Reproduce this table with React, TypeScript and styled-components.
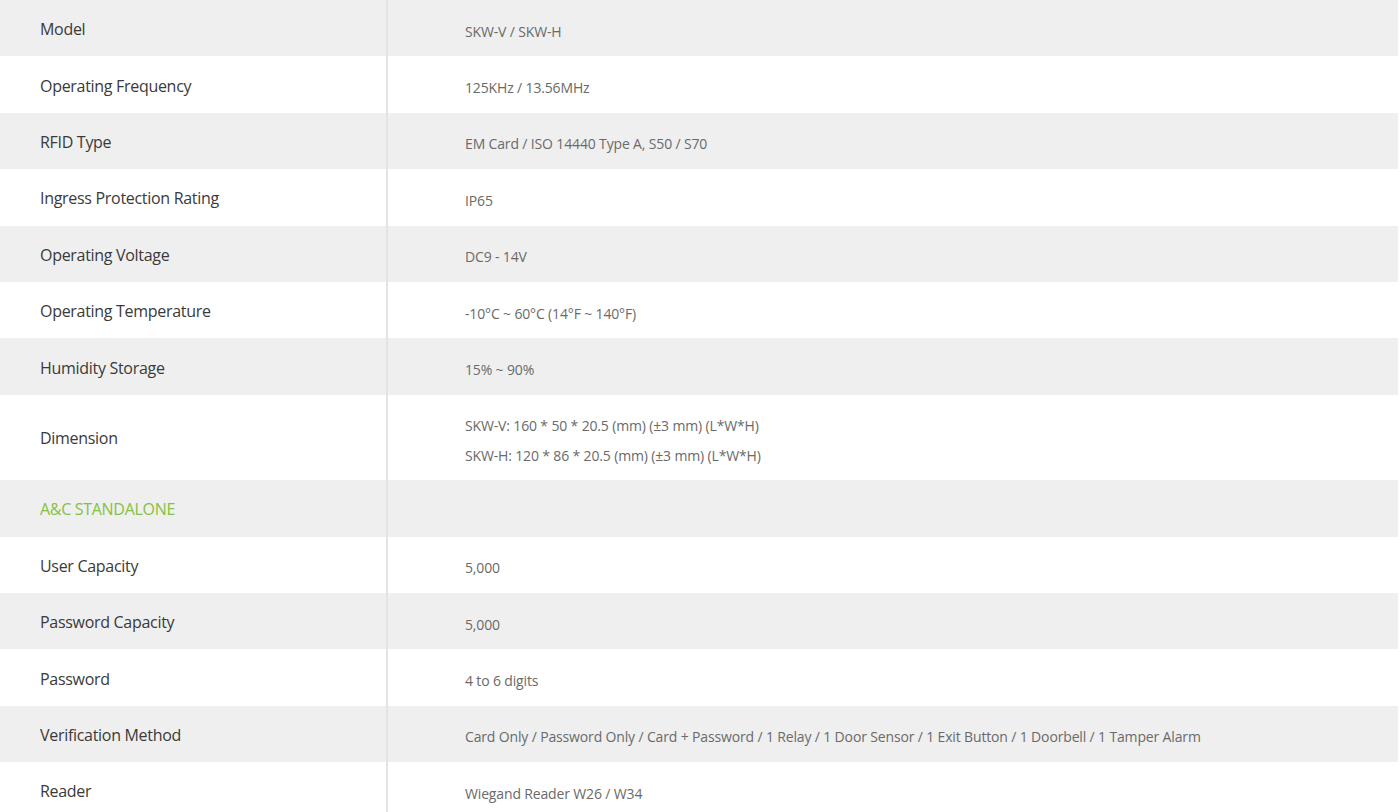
import React from "react";
import styled, { createGlobalStyle } from "styled-components";

const GlobalStyle = createGlobalStyle`
  html, body { margin: 0; padding: 0; background: #ffffff; }
  body { font-family: "Open Sans", "Lato", sans-serif; }
`;

const Table = styled.div`
  width: 1398px;
  display: flex;
  flex-direction: column;
`;

const Row = styled.div<{ $shaded: boolean; $tall?: boolean }>`
  display: grid;
  grid-template-columns: 386px 2px 1fr;
  height: ${(p) => (p.$tall ? "85.5px" : "56.4px")};
  background: ${(p) => (p.$shaded ? "#efefef" : "#ffffff")};
`;

const Divider = styled.div`
  background: #e4e4e4;
`;

const Label = styled.div<{ $accent?: boolean }>`
  display: flex;
  align-items: center;
  padding-left: 40px;
  padding-top: 2px;
  font-family: "Open Sans", "Lato", sans-serif;
  font-size: 16px;
  letter-spacing: -0.3px;
  color: ${(p) => (p.$accent ? "#84c241" : "#3a3a3a")};
`;

const Value = styled.div`
  display: flex;
  flex-direction: column;
  justify-content: center;
  padding-left: 77px;
  padding-top: 7px;
  font-family: "Open Sans", "Lato", sans-serif;
  font-size: 14px;
  line-height: 30px;
  letter-spacing: -0.15px;
  color: #6a6a6a;
`;

type Spec = { label: string; value: string[]; accent?: boolean };

const specs: Spec[] = [
  { label: "Model", value: ["SKW-V / SKW-H"] },
  { label: "Operating Frequency", value: ["125KHz / 13.56MHz"] },
  { label: "RFID Type", value: ["EM Card / ISO 14440 Type A, S50 / S70"] },
  { label: "Ingress Protection Rating", value: ["IP65"] },
  { label: "Operating Voltage", value: ["DC9 - 14V"] },
  { label: "Operating Temperature", value: ["-10°C ~ 60°C (14°F ~ 140°F)"] },
  { label: "Humidity Storage", value: ["15% ~ 90%"] },
  {
    label: "Dimension",
    value: [
      "SKW-V: 160 * 50 * 20.5 (mm) (±3 mm) (L*W*H)",
      "SKW-H: 120 * 86 * 20.5 (mm) (±3 mm) (L*W*H)",
    ],
  },
  { label: "A&C STANDALONE", value: [], accent: true },
  { label: "User Capacity", value: ["5,000"] },
  { label: "Password Capacity", value: ["5,000"] },
  { label: "Password", value: ["4 to 6 digits"] },
  {
    label: "Verification Method",
    value: [
      "Card Only / Password Only / Card + Password / 1 Relay / 1 Door Sensor / 1 Exit Button / 1 Doorbell / 1 Tamper Alarm",
    ],
  },
  { label: "Reader", value: ["Wiegand Reader W26 / W34"] },
];

export default function App() {
  return (
    <>
      <GlobalStyle />
      <Table>
        {specs.map((s, i) => (
          <Row key={s.label} $shaded={i % 2 === 0} $tall={s.value.length > 1}>
            <Label $accent={s.accent}>{s.label}</Label>
            <Divider />
            <Value>
              {s.value.map((v) => (
                <span key={v}>{v}</span>
              ))}
            </Value>
          </Row>
        ))}
      </Table>
    </>
  );
}
